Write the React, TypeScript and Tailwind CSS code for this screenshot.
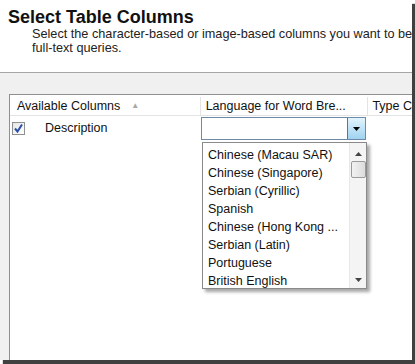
import React from 'react';

const languages = [
  'Chinese (Macau SAR)',
  'Chinese (Singapore)',
  'Serbian (Cyrillic)',
  'Spanish',
  'Chinese (Hong Kong ...',
  'Serbian (Latin)',
  'Portuguese',
  'British English',
];

function CheckBox() {
  return (
    <div className="w-[13px] h-[13px] border border-[#8f8f8f] bg-gradient-to-br from-[#e6e6e6] to-[#ffffff] flex items-center justify-center">
      <svg width="11" height="11" viewBox="0 0 11 11">
        <path d="M2 5.5 L4.5 8.5 L9 1.5" fill="none" stroke="#2a4fa8" strokeWidth="2" />
      </svg>
    </div>
  );
}

function ArrowDown({ color = '#000' }: { color?: string }) {
  return (
    <svg width="7" height="4" viewBox="0 0 7 4">
      <path d="M0 0 H7 L3.5 4 Z" fill={color} />
    </svg>
  );
}

function DropList() {
  return (
    <div className="absolute left-0 top-[24px] w-[165px] h-[147px] bg-white border border-[#8a8a8a] shadow-[3px_3px_3px_rgba(0,0,0,0.35)] flex">
      <div className="flex-1 pt-[3px] pl-[5px]">
        {languages.map((l) => (
          <div key={l} className="h-[18px] leading-[18px] text-[12.5px] text-[#111] whitespace-nowrap">
            {l}
          </div>
        ))}
      </div>
      <div className="w-[17px] bg-[#f4f4f4] border-l border-[#e8e8e8] flex flex-col items-center">
        <div className="h-[17px] flex items-center justify-center pt-[4px]">
          <svg width="7" height="4" viewBox="0 0 7 4">
            <path d="M0 4 H7 L3.5 0 Z" fill="#444" />
          </svg>
        </div>
        <div className="mt-[1px] w-[15px] h-[17px] rounded-[2px] border border-[#9a9a9a] bg-gradient-to-r from-[#f2f2f2] to-[#dcdcdc]" />
        <div className="flex-1" />
        <div className="h-[17px] flex items-center justify-center">
          <ArrowDown color="#444" />
        </div>
      </div>
    </div>
  );
}

export default function App() {
  return (
    <div className="w-[415px] h-[364px] bg-white" style={{ fontFamily: '"Liberation Sans", Arial, sans-serif' }}>
      <div className="w-[412px] h-[360px] flex flex-col bg-[#f0f0f0] shadow-[3px_4px_1px_rgba(30,30,30,0.85)] overflow-hidden">
        <div className="h-[73px] bg-white border-b border-[#a6a6a6] shrink-0">
          <div className="pt-[8px] pl-[8px] leading-[19px] text-[18px] font-bold text-[#111]">Select Table Columns</div>
          <div className="pl-[32px] text-[12.7px] leading-[14px] text-[#222] whitespace-nowrap">
            Select the character-based or image-based columns you want to be
            <br />
            full-text queries.
          </div>
        </div>
        <div className="flex-1 pl-[9px] pt-[21px] flex flex-col">
          <div className="flex-1 bg-white border-l border-t border-[#8e8f8f] text-[12.5px] text-[#111]">
            <div className="h-[21px] pt-[2px] flex border-b border-[#e3e3e3]">
              <div className="w-[191px] pl-[7px] flex items-center border-r border-[#e3e3e3]">
                Available Columns
                <span className="ml-[11px] text-[8px] text-[#a8a8a8]">▲</span>
              </div>
              <div className="w-[168px] pl-[5px] flex items-center border-r border-[#e3e3e3]">
                Language for Word Bre...
              </div>
              <div className="pl-[4px] flex items-center whitespace-nowrap">Type C</div>
            </div>
            <div className="h-[24px] flex">
              <div className="w-[191px] pl-[2px] pt-[1px] flex items-center gap-[20px]">
                <CheckBox />
                <span>Description</span>
              </div>
              <div className="relative w-[165px] h-[23px] mt-[1px] border border-[#6f8aa8] bg-white flex justify-end">
                <div className="w-[18px] h-full border-l border-[#3c7fb1] bg-gradient-to-b from-[#e3f4fc] to-[#9fd3f0] flex items-center justify-center">
                  <ArrowDown />
                </div>
                <DropList />
              </div>
            </div>
          </div>
        </div>
      </div>
    </div>
  );
}
